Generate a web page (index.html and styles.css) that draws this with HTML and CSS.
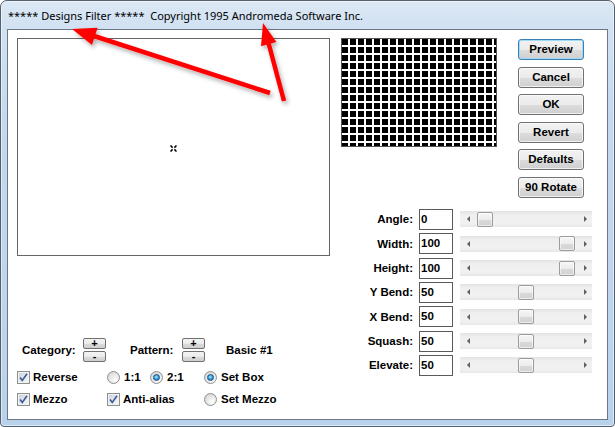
FILE: index.html
```html
<!DOCTYPE html>
<html>
<head>
<meta charset="utf-8">
<link rel="stylesheet" href="styles.css">
</head>
<body>
<div class="window">
  <div class="titlebar">***** Designs Filter *****  Copyright 1995 Andromeda Software Inc.</div>
  <div class="client">
    <div class="left">
      <div class="preview">
        <svg class="cursor" width="7" height="7" viewBox="0 0 7 7"><path d="M0.5 0.5 L2.6 2.6 M4.4 2.6 L6.5 0.5 M0.5 6.5 L2.6 4.4 M4.4 4.4 L6.5 6.5" stroke="#000" stroke-width="1.5"/></svg>
      </div>
      <div class="controls">
        <div class="spinrow">
          <span class="lbl cat">Category:</span>
          <span class="spin"><span class="sbtn">+</span><span class="sbtn">-</span></span>
          <span class="lbl pat">Pattern:</span>
          <span class="spin"><span class="sbtn">+</span><span class="sbtn">-</span></span>
          <span class="lbl basic">Basic #1</span>
        </div>
        <div class="opts">
          <label class="opt"><span class="cb"><svg width="11" height="11" viewBox="0 0 11 11"><path d="M2 5.5 L4.3 8.5 L9 1.8" fill="none" stroke="#3b5a9a" stroke-width="1.6"/></svg></span>Reverse</label>
          <label class="opt r"><span class="radio"></span>1:1</label>
          <label class="opt r"><span class="radio on"></span>2:1</label>
          <label class="opt r"><span class="radio on"></span>Set Box</label>
          <label class="opt"><span class="cb"><svg width="11" height="11" viewBox="0 0 11 11"><path d="M2 5.5 L4.3 8.5 L9 1.8" fill="none" stroke="#3b5a9a" stroke-width="1.6"/></svg></span>Mezzo</label>
          <label class="opt span2"><span class="cb"><svg width="11" height="11" viewBox="0 0 11 11"><path d="M2 5.5 L4.3 8.5 L9 1.8" fill="none" stroke="#3b5a9a" stroke-width="1.6"/></svg></span>Anti-alias</label>
          <label class="opt r"><span class="radio"></span>Set Mezzo</label>
        </div>
      </div>
    </div>
    <div class="right">
      <div class="top">
        <div class="pattern"></div>
        <div class="buttons">
          <button class="btn default">Preview</button>
          <button class="btn">Cancel</button>
          <button class="btn">OK</button>
          <button class="btn">Revert</button>
          <button class="btn">Defaults</button>
          <button class="btn">90 Rotate</button>
        </div>
      </div>
      <div class="sliders">
        <span class="slbl">Angle:</span><span class="field">0</span>
        <span class="scroll"><span class="arr l"></span><span class="track"><span class="thumb" style="--v:0"></span></span><span class="arr r"></span></span>
        <span class="slbl">Width:</span><span class="field">100</span>
        <span class="scroll"><span class="arr l"></span><span class="track"><span class="thumb" style="--v:100"></span></span><span class="arr r"></span></span>
        <span class="slbl">Height:</span><span class="field">100</span>
        <span class="scroll"><span class="arr l"></span><span class="track"><span class="thumb" style="--v:100"></span></span><span class="arr r"></span></span>
        <span class="slbl">Y Bend:</span><span class="field">50</span>
        <span class="scroll"><span class="arr l"></span><span class="track"><span class="thumb" style="--v:50"></span></span><span class="arr r"></span></span>
        <span class="slbl">X Bend:</span><span class="field">50</span>
        <span class="scroll"><span class="arr l"></span><span class="track"><span class="thumb" style="--v:50"></span></span><span class="arr r"></span></span>
        <span class="slbl">Squash:</span><span class="field">50</span>
        <span class="scroll"><span class="arr l"></span><span class="track"><span class="thumb" style="--v:50"></span></span><span class="arr r"></span></span>
        <span class="slbl">Elevate:</span><span class="field">50</span>
        <span class="scroll"><span class="arr l"></span><span class="track"><span class="thumb" style="--v:50"></span></span><span class="arr r"></span></span>
      </div>
    </div>
  </div>
  <svg class="arrows" width="615" height="427" viewBox="0 0 615 427">
    <defs>
      <filter id="sh" x="-20%" y="-20%" width="140%" height="140%">
        <feDropShadow dx="2" dy="3" stdDeviation="2.2" flood-color="#000" flood-opacity="0.3"/>
      </filter>
    </defs>
    <g filter="url(#sh)" fill="#ff0000" stroke="#ff0000">
      <line x1="270" y1="93" x2="94" y2="36" stroke-width="4.5"/>
      <polygon points="72,29 97.6,27.8 92,45" stroke="none"/>
      <line x1="284" y1="101" x2="268.5" y2="43" stroke-width="4.5"/>
      <polygon points="263,23 276.4,42.1 261,46.3" stroke="none"/>
    </g>
  </svg>
</div>
</body>
</html>
```

FILE: styles.css
```css
html, body {
  margin: 0;
  padding: 0;
  background: #ffffff;
}
body {
  width: 615px;
  height: 427px;
  overflow: hidden;
}
.window {
  position: relative;
  box-sizing: border-box;
  width: 615px;
  height: 427px;
  border: 1px solid #56606c;
  border-radius: 7px 7px 4px 4px;
  background: linear-gradient(#dce8f5 0px, #d0e1f2 28px, #c4d9ef 120px, #b9d2ec 427px);
  padding: 0 6px 6px 6px;
  display: flex;
  flex-direction: column;
  box-shadow: inset 0 0 0 1px rgba(255,255,255,0.5);
}
.titlebar {
  height: 28px;
  box-sizing: border-box;
  padding: 7px 0 0 1px;
  font-family: "Noto Sans", "Open Sans", sans-serif;
  font-size: 11px;
  line-height: 16px;
  color: #000;
  white-space: pre;
}
.client {
  flex: 1;
  box-sizing: border-box;
  border: 1px solid #6b7785;
  background: #fff;
  display: flex;
  padding: 8px 0 0 9px;
  font-family: "Liberation Sans", Arial, sans-serif;
  font-weight: bold;
  font-size: 11.5px;
  color: #000;
}
.left {
  width: 313px;
  display: flex;
  flex-direction: column;
}
.preview {
  box-sizing: border-box;
  width: 313px;
  height: 218px;
  border: 1px solid #666;
  display: flex;
  align-items: center;
  justify-content: center;
}
.cursor {
  display: block;
  margin-top: 2px;
}
.controls {
  margin-top: 82px;
}
.spinrow {
  display: flex;
  align-items: center;
  height: 24px;
}
.lbl {
  display: block;
}
.cat {
  margin-left: 5px;
  width: 61px;
}
.pat {
  margin-left: 24px;
  width: 52px;
}
.basic {
  margin-left: 21px;
}
.spin {
  display: flex;
  flex-direction: column;
  gap: 2px;
  width: 23px;
}
.sbtn {
  box-sizing: border-box;
  height: 11px;
  width: 23px;
  border: 1px solid #707070;
  border-radius: 2px;
  background: linear-gradient(#f4f4f4 0%, #ebebeb 50%, #dcdcdc 51%, #cfcfcf 100%);
  font-size: 11px;
  line-height: 8px;
  text-align: center;
}
.opts {
  margin-top: 9px;
  display: grid;
  grid-template-columns: 90px 43px 54px auto;
  grid-auto-rows: 13px;
  row-gap: 9px;
}
.opt {
  display: flex;
  align-items: center;
  gap: 3px;
  line-height: 13px;
  white-space: nowrap;
}
.opt.r {
  gap: 4px;
}
.span2 {
  grid-column: span 2;
}
.cb {
  box-sizing: border-box;
  width: 13px;
  height: 13px;
  border: 1px solid #8e8f8f;
  background: linear-gradient(135deg, #c9ced6 0%, #e4e7ec 50%, #f7f7f7 100%);
  box-shadow: inset 0 0 0 1px #f2f2f2;
  display: flex;
  align-items: center;
  justify-content: center;
  flex: none;
}
.cb svg {
  display: block;
}
.radio {
  box-sizing: border-box;
  width: 13px;
  height: 13px;
  border-radius: 50%;
  border: 1px solid #8e8f8f;
  background: radial-gradient(circle at 65% 70%, #ffffff 0%, #e6e6e6 50%, #cfcfcf 100%);
  flex: none;
  display: flex;
  align-items: center;
  justify-content: center;
}
.radio.on::after {
  content: "";
  box-sizing: border-box;
  width: 7px;
  height: 7px;
  border-radius: 50%;
  border: 1px solid #1d4f7d;
  background: radial-gradient(circle at 45% 40%, #b8ecff 0%, #3aa6e6 45%, #165c9c 100%);
}
.right {
  margin-left: 11px;
  width: 251px;
  display: flex;
  flex-direction: column;
}
.top {
  display: flex;
  align-items: flex-start;
}
.pattern {
  box-sizing: border-box;
  width: 156px;
  height: 109px;
  border: 1px solid #555;
  background-color: #000;
  background-image:
    linear-gradient(90deg, transparent 6px, #fff 6px),
    linear-gradient(transparent 6px, #fff 6px);
  background-size: 8px 8px;
}
.buttons {
  margin-left: 21px;
  margin-top: 1px;
  display: flex;
  flex-direction: column;
  gap: 6.6px;
}
.btn {
  box-sizing: border-box;
  width: 66px;
  height: 21px;
  margin: 0;
  padding: 0;
  border: 1px solid #707070;
  border-radius: 3px;
  background: linear-gradient(#f2f2f2 0%, #ebebeb 50%, #dddddd 51%, #cfcfcf 100%);
  box-shadow: inset 0 0 0 1px rgba(255,255,255,0.7);
  font-family: "Liberation Sans", Arial, sans-serif;
  font-weight: bold;
  font-size: 11.5px;
  color: #000;
  line-height: 19px;
  text-align: center;
}
.btn.default {
  border-color: #3c7fb1;
  box-shadow: inset 0 0 0 1px #9fdaf8;
}
.sliders {
  margin-top: 11px;
  display: grid;
  grid-template-columns: 72px 34px 133px;
  column-gap: 6px;
  grid-auto-rows: 21px;
  row-gap: 3.33px;
  align-items: center;
}
.slbl {
  text-align: right;
  white-space: nowrap;
}
.field {
  box-sizing: border-box;
  height: 21px;
  border: 1px solid #5a5a5a;
  padding-left: 1px;
  line-height: 19px;
}
.scroll {
  margin-left: 1px;
  width: 132px;
  height: 16px;
  display: flex;
  align-items: stretch;
  background: linear-gradient(#e3e3e3 0%, #efefef 25%, #f1f1f1 75%, #e7e7e7 100%);
}
.arr {
  width: 17px;
  flex: none;
  display: flex;
  align-items: center;
  justify-content: center;
}
.arr::before {
  content: "";
  width: 0;
  height: 0;
  border-top: 3.5px solid transparent;
  border-bottom: 3.5px solid transparent;
}
.arr.l::before {
  border-right: 3px solid #606060;
}
.arr.r::before {
  border-left: 3px solid #606060;
  margin-left: 4px;
}
.track {
  flex: 1;
  display: flex;
  align-items: center;
}
.thumb {
  box-sizing: border-box;
  width: 16px;
  height: 15px;
  margin-left: calc((100% - 16px) * var(--v) / 100);
  border: 1px solid #9c9c9c;
  border-radius: 2px;
  background: linear-gradient(#f6f6f6 0%, #ececec 50%, #dadada 51%, #d2d2d2 100%);
  box-shadow: inset 0 0 0 1px rgba(255,255,255,0.6);
}
.arrows {
  position: absolute;
  left: -1px;
  top: -1px;
  pointer-events: none;
}
```
